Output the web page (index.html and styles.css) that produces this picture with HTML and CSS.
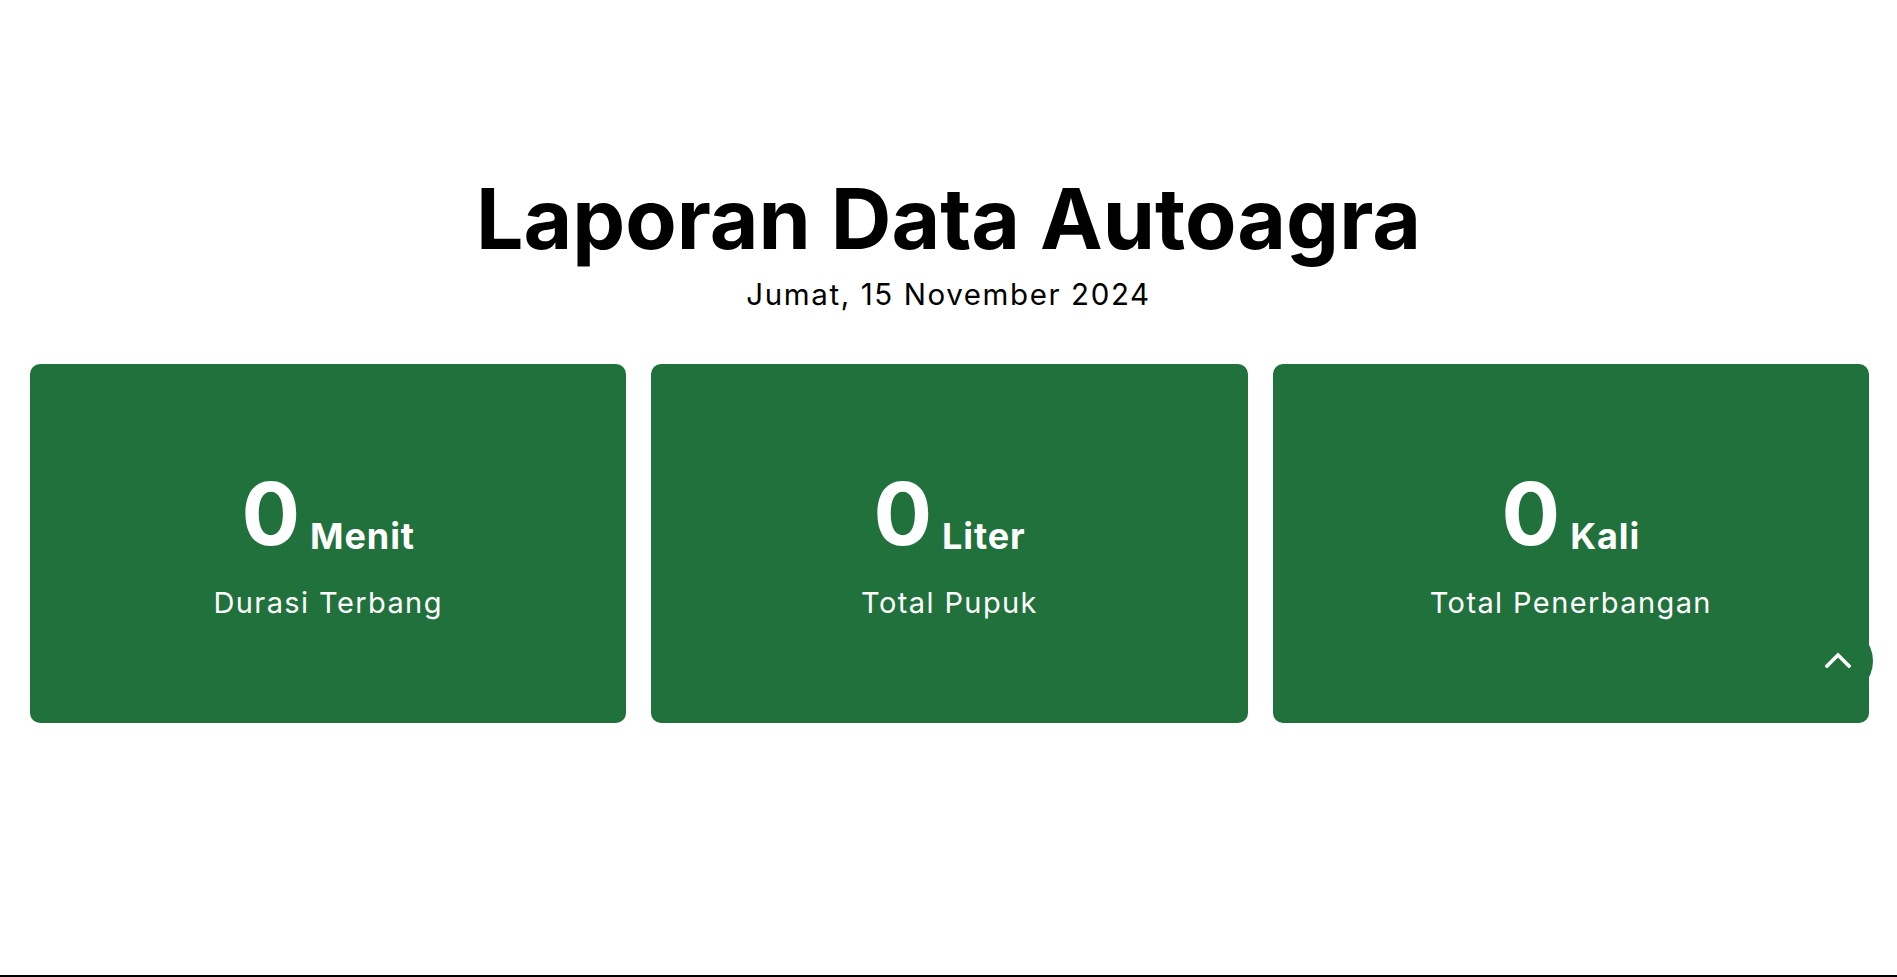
FILE: index.html
```html
<!DOCTYPE html>
<html lang="id">
<head>
<meta charset="utf-8">
<title>Laporan Data Autoagra</title>
<link rel="stylesheet" href="styles.css">
</head>
<body>
<div class="page">
  <header class="heading">
    <h1 class="title">Laporan Data Autoagra</h1>
    <p class="date">Jumat, 15 November 2024</p>
  </header>
  <section class="stats">
    <div class="card">
      <div class="value"><span class="num">0</span><span class="unit">Menit</span></div>
      <div class="label">Durasi Terbang</div>
    </div>
    <div class="card">
      <div class="value"><span class="num">0</span><span class="unit">Liter</span></div>
      <div class="label">Total Pupuk</div>
    </div>
    <div class="card">
      <div class="value"><span class="num">0</span><span class="unit">Kali</span></div>
      <div class="label">Total Penerbangan</div>
    </div>
  </section>
  <div class="bottom-rule"></div>
</div>
<a class="back-top" href="#" aria-label="Kembali ke atas">
  <svg width="26" height="16" viewBox="0 0 26 16" fill="none"><polyline points="2,14 13,3 24,14" stroke="#fff" stroke-width="3.6" stroke-linecap="square" stroke-linejoin="miter"/></svg>
</a>
</body>
</html>
```
FILE: styles.css
```css
html, body {
  margin: 0;
  padding: 0;
  background: #fff;
}
body {
  font-family: Inter, "Noto Sans", sans-serif;
  color: #000;
}
.page {
  min-height: 100vh;
  display: flex;
  flex-direction: column;
  box-sizing: border-box;
}
.heading {
  text-align: center;
  padding-top: 169px;
}
.title {
  margin: 0;
  font-size: 84px;
  font-weight: 700;
  line-height: 1.2;
  letter-spacing: 0;
}
.date {
  margin: 7px 0 0;
  font-size: 29.5px;
  font-weight: 400;
  line-height: 1.2;
  letter-spacing: 1.6px;
}
.stats {
  display: flex;
  gap: 25px;
  padding: 0 28px 0 30px;
  margin-top: 52px;
}
.card {
  flex: 1;
  height: 359px;
  background: #21713d;
  border-radius: 10px;
  color: #fff;
  display: flex;
  flex-direction: column;
  align-items: center;
  justify-content: center;
  padding-top: 4px;
  box-sizing: border-box;
}
.value {
  display: flex;
  align-items: baseline;
  line-height: 1;
}
.num {
  font-size: 87px;
  font-weight: 700;
}
.unit {
  font-size: 36px;
  font-weight: 700;
  margin-left: 10px;
  position: relative;
  top: 4px;
  letter-spacing: 0.9px;
}
.label {
  margin-top: 29px;
  font-size: 29px;
  line-height: 1.2;
  font-weight: 400;
  letter-spacing: 1.4px;
}
.bottom-rule {
  margin-top: auto;
  height: 2px;
  background: #000;
}
.back-top {
  position: fixed;
  right: 24px;
  bottom: 281px;
  width: 70px;
  height: 70px;
  border-radius: 50%;
  background: #21713d;
  display: flex;
  align-items: center;
  justify-content: center;
}
.back-top svg {
  display: block;
  margin-top: -2px;
}
```
